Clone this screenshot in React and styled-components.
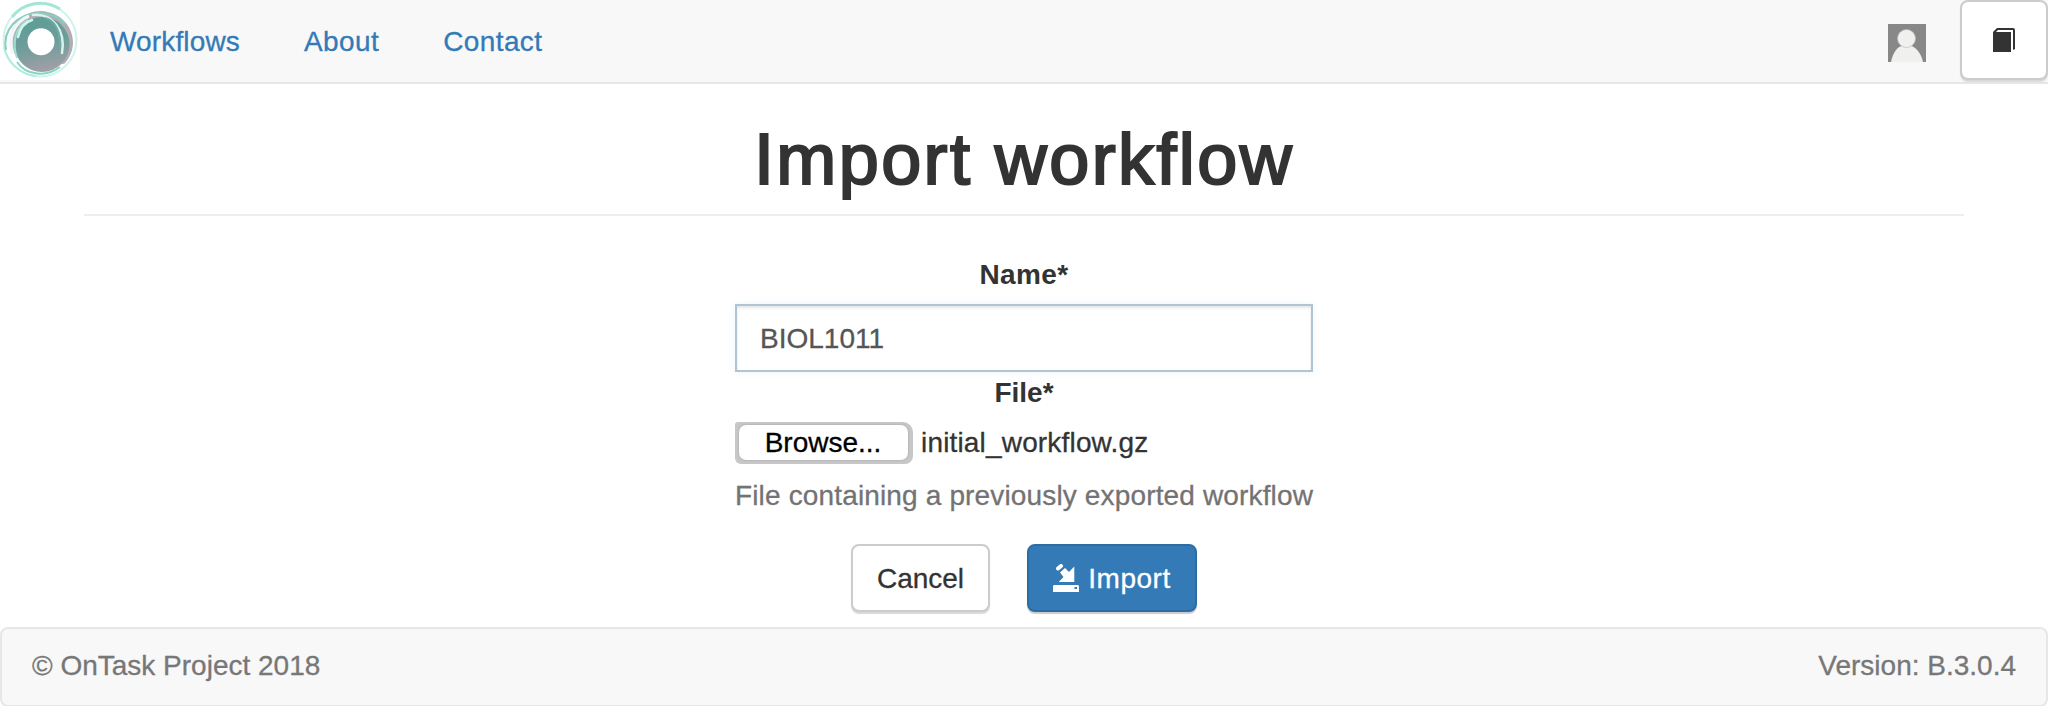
import React from 'react';
import styled, { createGlobalStyle } from 'styled-components';

const GlobalStyle = createGlobalStyle`
  * { box-sizing: border-box; }
  body {
    margin: 0;
    background: #fff;
    color: #333;
    font: 28px/40px "Liberation Sans", Arial, sans-serif;
    -webkit-text-stroke: 0.3px currentColor;
    overflow: hidden;
  }
`;

const Page = styled.div`
  display: flex;
  flex-direction: column;
  height: 706px;
  overflow: hidden;
`;

const Navbar = styled.nav`
  display: flex;
  flex: none;
  height: 84px;
  background: #f8f8f8;
  border-bottom: 2px solid #e7e7e7;
`;

const Brand = styled.a`
  width: 80px;
  height: 80px;
  background: #fff;
  svg { display: block; }
`;

const NavLinks = styled.div`
  display: flex;
  gap: 64px;
  padding: 22px 0 0 30px;
  flex: 1;
`;

const NavLink = styled.a`
  color: #337ab7;
  letter-spacing: ${(p) => p.$spacing || 0}px;
  white-space: nowrap;
`;

const Avatar = styled.svg`
  display: block;
  margin: 24px 34px 0 0;
`;

const Button = styled.button`
  display: flex;
  align-items: center;
  justify-content: center;
  width: ${(p) => p.$width}px;
  height: ${(p) => p.$height || 68}px;
  padding: ${(p) => p.$padTop || 0}px 0 0;
  font: inherit;
  -webkit-text-stroke: 0.3px currentColor;
  letter-spacing: ${(p) => p.$spacing || 0}px;
  color: ${(p) => (p.$primary ? '#fff' : '#333')};
  background: ${(p) => (p.$primary ? '#337ab7' : '#fff')};
  border: 2px solid ${(p) => (p.$primary ? '#2e6da4' : '#ccc')};
  border-radius: 8px;
  box-shadow: 0 2px 1px ${(p) => (p.$primary ? '#ccc' : '#d9d9d9')};
`;

const Label = styled.label`
  display: block;
  padding-top: 1px;
  margin-bottom: 9px;
  font-weight: 700;
  text-align: center;
  -webkit-text-stroke: 0;
  letter-spacing: ${(p) => p.$spacing || 0}px;
`;

const Header = styled.header`
  margin: 36px 84px 38px;
  height: 96px;
  flex: none;
  border-bottom: 2px solid #eee;
`;

const Title = styled.h1`
  margin: 0;
  font-size: 72px;
  line-height: 79px;
  font-weight: 400;
  text-align: center;
  letter-spacing: 2.4px;
  -webkit-text-stroke: 2.2px #333;
`;

const Form = styled.form`
  width: 578px;
  height: 290px;
  flex: none;
  margin: 0 auto;
`;

const Input = styled.input`
  display: block;
  width: 100%;
  height: 68px;
  padding: 2px 24px 0 23px;
  font: inherit;
  color: #555;
  background: #fff;
  border: 2px solid #b0c4d4;
  border-radius: 0;
  outline: none;
  box-shadow: inset 0 2px 3px rgba(0, 0, 0, 0.1), 0 0 8px rgba(102, 175, 233, 0.12);
`;

const FileField = styled.div`
  display: flex;
  gap: 8px;
  height: 42px;
`;

const BrowseFrame = styled.div`
  width: 178px;
  height: 42px;
  padding: 3px 5px 4px 4px;
  background: #c7c7c9;
  border-radius: 3px 10px 8px 6px;
`;

const BrowseButton = styled.button`
  display: block;
  width: 169px;
  height: 35px;
  padding: 0 1px 0 0;
  font: inherit;
  line-height: 34px;
  -webkit-text-stroke: 0.3px #000;
  color: #000;
  background: #fff;
  border: 0;
  border-radius: 7px;
  box-shadow: 0 0 2px #999;
`;

const FileName = styled.span`
  padding-top: 1px;
  letter-spacing: 0.17px;
`;

const Help = styled.p`
  margin: 12px 0 0;
  color: #737373;
  letter-spacing: 0.15px;
  white-space: nowrap;
`;

const Actions = styled.div`
  display: flex;
  justify-content: center;
  gap: 37px;
  margin-bottom: 15px;
`;

const ImportIcon = styled.svg`
  margin: -3px 9px 0 0;
`;

const Footer = styled.footer`
  display: flex;
  flex: none;
  justify-content: space-between;
  height: 80px;
  padding: 17px 30px 0;
  color: #777;
  background: #f8f8f8;
  border: 2px solid #e7e7e7;
  border-radius: 8px;
`;

function Logo() {
  return (
    <svg width="80" height="80" viewBox="0 0 80 80" fill="none">
      <defs>
        <linearGradient id="disc" x1="0.4" y1="0" x2="0.6" y2="1">
          <stop offset="0" stopColor="#5e9d97" />
          <stop offset="0.5" stopColor="#6e9d9a" />
          <stop offset="1" stopColor="#a59fa9" />
        </linearGradient>
        <filter id="soft"><feGaussianBlur stdDeviation="0.7" /></filter>
      </defs>
      <g filter="url(#soft)">
        <circle cx="40" cy="40" r="36.5" stroke="#d0f3eb" strokeWidth="2" />
        <path d="M12 17A36 36 0 0 1 60 9" stroke="#a3e6d8" strokeWidth="3" />
        <path d="M4 47C7 62 19 74 36 76" stroke="#b5eadf" strokeWidth="2" />
        <path d="M10 40C11 23 24 11 41 11C59 12 72 24 73 42C73 50 70 58 64 64L17 57C13 52 10 46 10 40Z" fill="#b1adb5" />
        <path d="M6 50C2 29 18 14 38 13C50 13 59 17 65 24" stroke="#86cfc1" strokeWidth="2" />
        <path d="M13 54C7 38 14 22 29 16" stroke="#f3f6f6" strokeWidth="3.5" />
        <circle cx="42" cy="44.5" r="27.5" fill="url(#disc)" />
        <path d="M17 58C12 43 15 27 28 20" stroke="#9eddd1" strokeWidth="2" />
        <path d="M18 37C20 28 25 22 32 20" stroke="#d3f7ef" strokeWidth="2.5" strokeLinecap="round" />
        <path d="M33 15C52 13 66 30 62 53" stroke="#d8f3ed" strokeWidth="2.5" strokeLinecap="round" />
        <path d="M45 18C55 20 61 32 60 47" stroke="#71aaa3" strokeWidth="2" />
        <path d="M17 62C26 76 47 77 60 67" stroke="#83d5c4" strokeWidth="2" />
        <circle cx="41" cy="41.8" r="13.5" fill="#fff" />
      </g>
    </svg>
  );
}

export default function App() {
  return (
    <Page>
      <GlobalStyle />
      <Navbar>
        <Brand><Logo /></Brand>
        <NavLinks>
          <NavLink $spacing={0.15}>Workflows</NavLink>
          <NavLink $spacing={0.4}>About</NavLink>
          <NavLink $spacing={0.4}>Contact</NavLink>
        </NavLinks>
        <Avatar width="38" height="38" viewBox="0 0 38 38">
          <rect width="38" height="38" fill="#888" />
          <path d="M3 38C5 28 10 22 15 21.5H22C28 23 33 29 35 38Z" fill="#f0f0ee" />
          <circle cx="18.5" cy="14.5" r="9" fill="#f0f0ee" stroke="#bbb" strokeWidth="0.7" />
        </Avatar>
        <Button $width={88} $height={80} aria-label="Documentation">
          <svg width="22" height="24" viewBox="0 0 22 24">
            <path d="M0 24V4L4 0H20Q22 0 22 2V21L20 22V2H5L3 4H18V24Z" fill="#333" />
          </svg>
        </Button>
      </Navbar>
      <Header>
        <Title>Import workflow</Title>
      </Header>
      <Form onSubmit={(e) => e.preventDefault()}>
        <Label htmlFor="name" $spacing={0.4}>Name*</Label>
        <Input id="name" defaultValue="BIOL1011" />
        <Label>File*</Label>
        <FileField>
          <BrowseFrame>
            <BrowseButton type="button">Browse...</BrowseButton>
          </BrowseFrame>
          <FileName>initial_workflow.gz</FileName>
        </FileField>
        <Help>File containing a previously exported workflow</Help>
      </Form>
      <Actions>
        <Button $width={139} $padTop={2}>Cancel</Button>
        <Button $primary $width={170} $padTop={2} $spacing={0.5}>
          <ImportIcon width="26" height="28" viewBox="0 0 26 28">
            <path d="M12 4L16 8L21.3 2.5V18H5.7L10.5 13L7 8.5Z" fill="#fff" />
            <path d="M5 4.5L8 2" stroke="#fff" strokeWidth="4" strokeLinecap="round" />
            <path d="M1 21H25L26 22V28H0V22ZM21.5 23V25H24V23Z" fill="#fff" fillRule="evenodd" />
          </ImportIcon>
          Import
        </Button>
      </Actions>
      <Footer>
        <span>© OnTask Project 2018</span>
        <span>Version: B.3.0.4</span>
      </Footer>
    </Page>
  );
}
